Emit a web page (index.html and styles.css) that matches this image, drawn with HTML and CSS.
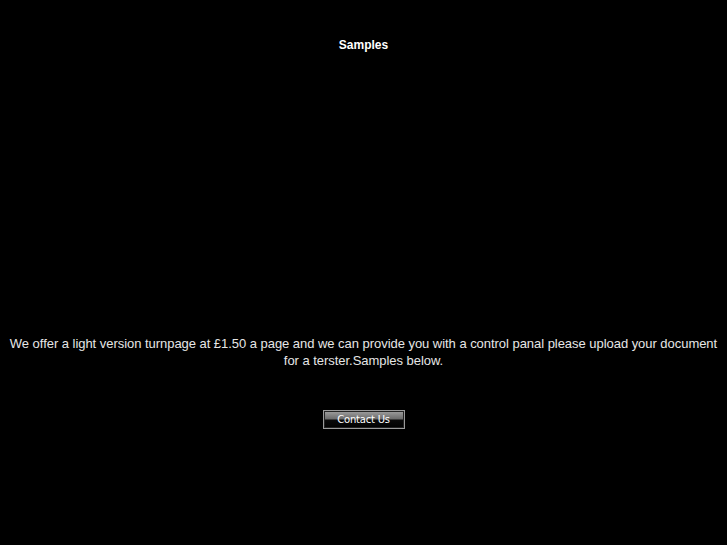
FILE: index.html
```html
<!DOCTYPE html>
<html>
<head>
<meta charset="utf-8">
<link rel="stylesheet" href="styles.css">
</head>
<body>
<div class="page">
  <h1 class="title">Samples</h1>
  <div class="stage"></div>
  <p class="intro">We offer a light version turnpage at £1.50 a page and we can provide you with a control panal please upload your document for a terster.Samples below.</p>
  <div class="actions">
    <button class="btn">Contact Us</button>
  </div>
</div>
</body>
</html>
```
FILE: styles.css
```css
html, body {
  margin: 0;
  padding: 0;
  background: #000;
  height: 100%;
}
.page {
  font-family: "Liberation Sans", Arial, sans-serif;
  color: #e6e6e6;
  display: flex;
  flex-direction: column;
  align-items: center;
}
.title {
  margin: 37px 0 0;
  font-size: 12px;
  font-weight: bold;
  line-height: 16px;
  color: #fff;
}
.stage {
  height: 282px;
}
.intro {
  margin: 0;
  padding: 0 4px;
  font-size: 13px;
  line-height: 17px;
  text-align: center;
  letter-spacing: -0.04px;
}
.actions {
  margin-top: 40px;
}
.btn {
  width: 82px;
  height: 19px;
  padding: 0;
  border: 1px solid #9a9a9a;
  box-shadow: inset 0 0 0 1px #222;
  background: linear-gradient(#a0a0a0 0%, #6a6a6a 48%, #0a0a0a 52%, #000 100%);
  color: #fff;
  font-family: "DejaVu Sans", sans-serif;
  font-size: 10px;
  letter-spacing: -0.2px;
  line-height: 17px;
}
```
